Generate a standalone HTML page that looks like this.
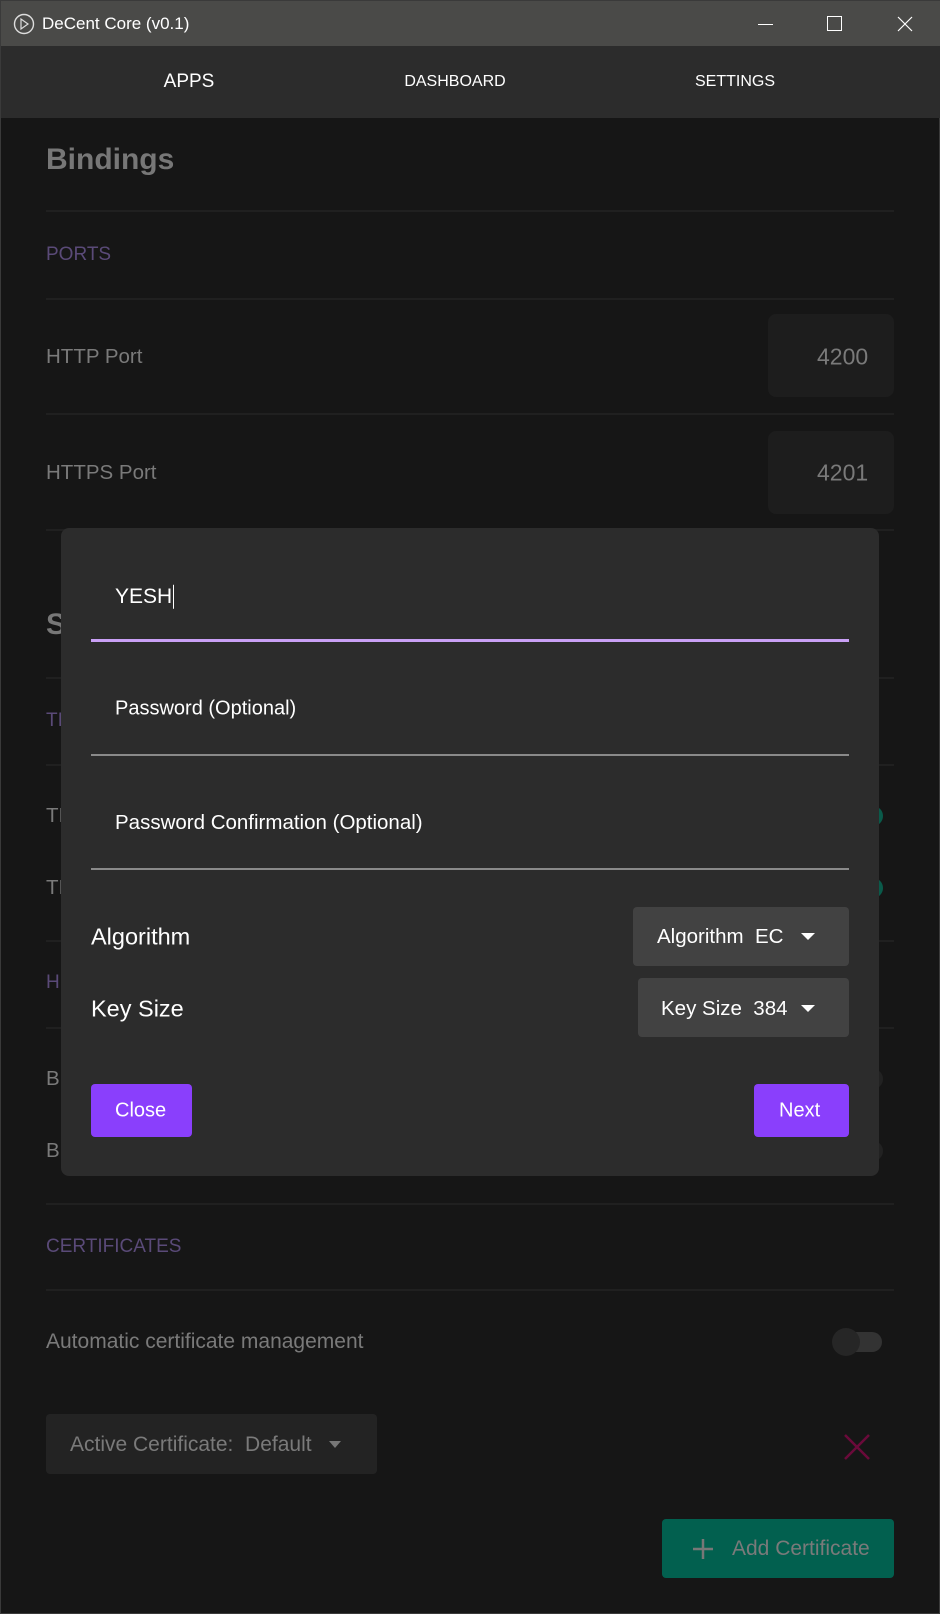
<!DOCTYPE html>
<html><head><style>
*{margin:0;padding:0;box-sizing:border-box}
body{width:940px;height:1614px;background:#161616;font-family:"Liberation Sans",sans-serif;position:relative;overflow:hidden;border:1px solid #3a3a3a}
.a{position:absolute}
.t{position:absolute;white-space:nowrap;transform:translateY(-50%)}
.div{position:absolute;left:45px;width:848px;height:2px;background:#202020}
.g{color:#7a7a7a;font-size:20.5px}
.p{color:#5a4a78;font-size:19px}
</style></head><body>
<div class="a" style="left:0;top:0;width:940px;height:45px;background:#4a4a48"></div>
<svg class="a" style="left:12px;top:12px" width="22" height="22" viewBox="0 0 22 22"><circle cx="11" cy="11" r="9.5" fill="none" stroke="#ddd" stroke-width="1.4"/><path d="M8 6v10l7-5z" fill="none" stroke="#ddd" stroke-width="1.2"/></svg>
<div class="t" style="left:41px;top:23px;color:#fff;font-size:17px">DeCent Core (v0.1)</div>
<div class="a" style="left:757px;top:23px;width:15px;height:1px;background:#fff"></div>
<div class="a" style="left:826px;top:15px;width:15px;height:15px;border:1px solid #fff"></div>
<svg class="a" style="left:896px;top:15px" width="16" height="16"><path d="M1 1L15 15M15 1L1 15" stroke="#fff" stroke-width="1.2"/></svg>
<div class="a" style="left:0;top:45px;width:940px;height:72px;background:#2c2c2c"></div>
<div class="t" style="left:188px;top:81px;color:#fff;font-size:19px;transform:translate(-50%,-50%)">APPS</div>
<div class="t" style="left:454px;top:81px;color:#fff;font-size:16px;transform:translate(-50%,-50%)">DASHBOARD</div>
<div class="t" style="left:734px;top:81px;color:#fff;font-size:16px;transform:translate(-50%,-50%)">SETTINGS</div>

<div class="t" style="left:45px;top:159px;color:#777;font-size:30px;font-weight:bold">Bindings</div>
<div class="div" style="top:209px"></div>
<div class="t p" style="left:45px;top:254px">PORTS</div>
<div class="div" style="top:297px"></div>
<div class="t g" style="left:45px;top:356px">HTTP Port</div>
<div class="a" style="left:767px;top:313px;width:126px;height:83px;background:#1d1d1d;border-radius:8px"></div>
<div class="t g" style="left:816px;top:356px;font-size:23px">4200</div>
<div class="div" style="top:412px"></div>
<div class="t g" style="left:45px;top:472px">HTTPS Port</div>
<div class="a" style="left:767px;top:430px;width:126px;height:83px;background:#1d1d1d;border-radius:8px"></div>
<div class="t g" style="left:816px;top:472px;font-size:23px">4201</div>
<div class="div" style="top:528px"></div>
<div class="t" style="left:45px;top:624px;color:#777;font-size:30px;font-weight:bold">S</div>
<div class="div" style="top:676px"></div>
<div class="t p" style="left:45px;top:720px">TI</div>
<div class="div" style="top:763px"></div>
<div class="t g" style="left:45px;top:815px">TI</div>
<div class="a" style="left:862px;top:805px;width:20px;height:20px;border-radius:50%;background:#0a5a4a"></div>
<div class="t g" style="left:45px;top:887px">TI</div>
<div class="a" style="left:862px;top:877px;width:20px;height:20px;border-radius:50%;background:#0a5a4a"></div>
<div class="div" style="top:939px"></div>
<div class="t p" style="left:45px;top:982px">H</div>
<div class="div" style="top:1026px"></div>
<div class="t g" style="left:45px;top:1078px">B</div>
<div class="a" style="left:862px;top:1068px;width:20px;height:20px;border-radius:50%;background:#222"></div>
<div class="t g" style="left:45px;top:1150px">B</div>
<div class="a" style="left:862px;top:1140px;width:20px;height:20px;border-radius:50%;background:#222"></div>
<div class="div" style="top:1202px"></div>
<div class="t p" style="left:45px;top:1246px">CERTIFICATES</div>
<div class="div" style="top:1288px"></div>
<div class="t g" style="left:45px;top:1341px;font-size:21px">Automatic certificate management</div>
<div class="a" style="left:840px;top:1331px;width:41px;height:20px;border-radius:10px;background:#333"></div>
<div class="a" style="left:831px;top:1327px;width:28px;height:28px;border-radius:50%;background:#262626"></div>
<div class="a" style="left:45px;top:1413px;width:331px;height:60px;background:#232323;border-radius:4px"></div>
<div class="t g" style="left:69px;top:1444px;font-size:21px">Active Certificate:&nbsp;&nbsp;Default</div>
<div class="a" style="left:328px;top:1440px;border-left:6px solid transparent;border-right:6px solid transparent;border-top:7px solid #777"></div>
<svg class="a" style="left:842px;top:1432px" width="28" height="28"><path d="M2 2L26 26M26 2L2 26" stroke="#6a0a3a" stroke-width="2.5"/></svg>
<div class="a" style="left:661px;top:1518px;width:232px;height:59px;background:#02604f;border-radius:4px"></div>
<svg class="a" style="left:690px;top:1536px" width="24" height="24"><path d="M12 2v20M2 12h20" stroke="#777" stroke-width="2.5"/></svg>
<div class="t g" style="left:731px;top:1548px;font-size:21px">Add Certificate</div>

<div class="a" style="left:60px;top:527px;width:818px;height:648px;background:#2c2c2c;border-radius:8px"></div>
<div class="t" style="left:114px;top:596px;color:#fff;font-size:21px">YESH<span style="display:inline-block;width:1px;height:24px;background:#fff;vertical-align:middle;margin-left:1px"></span></div>
<div class="a" style="left:90px;top:638px;width:758px;height:3px;background:#c9a0f5"></div>
<div class="t" style="left:114px;top:708px;color:#fff;font-size:20px">Password (Optional)</div>
<div class="a" style="left:90px;top:753px;width:758px;height:2px;background:#8a8a8a"></div>
<div class="t" style="left:114px;top:822px;color:#fff;font-size:20.5px">Password Confirmation (Optional)</div>
<div class="a" style="left:90px;top:867px;width:758px;height:2px;background:#8a8a8a"></div>
<div class="t" style="left:90px;top:936px;color:#fff;font-size:23.5px">Algorithm</div>
<div class="a" style="left:632px;top:906px;width:216px;height:59px;background:#424242;border-radius:4px"></div>
<div class="t" style="left:656px;top:936px;color:#fff;font-size:20.5px">Algorithm&nbsp;&nbsp;EC</div>
<div class="a" style="left:800px;top:932px;border-left:7px solid transparent;border-right:7px solid transparent;border-top:7px solid #fff"></div>
<div class="t" style="left:90px;top:1008px;color:#fff;font-size:23.5px">Key Size</div>
<div class="a" style="left:637px;top:977px;width:211px;height:59px;background:#424242;border-radius:4px"></div>
<div class="t" style="left:660px;top:1008px;color:#fff;font-size:20.5px">Key Size&nbsp;&nbsp;384</div>
<div class="a" style="left:800px;top:1004px;border-left:7px solid transparent;border-right:7px solid transparent;border-top:7px solid #fff"></div>
<div class="a" style="left:90px;top:1083px;width:101px;height:53px;background:#8a3ffc;border-radius:4px"></div>
<div class="t" style="left:114px;top:1110px;color:#fff;font-size:20px">Close</div>
<div class="a" style="left:753px;top:1083px;width:95px;height:53px;background:#8a3ffc;border-radius:4px"></div>
<div class="t" style="left:778px;top:1110px;color:#fff;font-size:20px">Next</div>
</body></html>
